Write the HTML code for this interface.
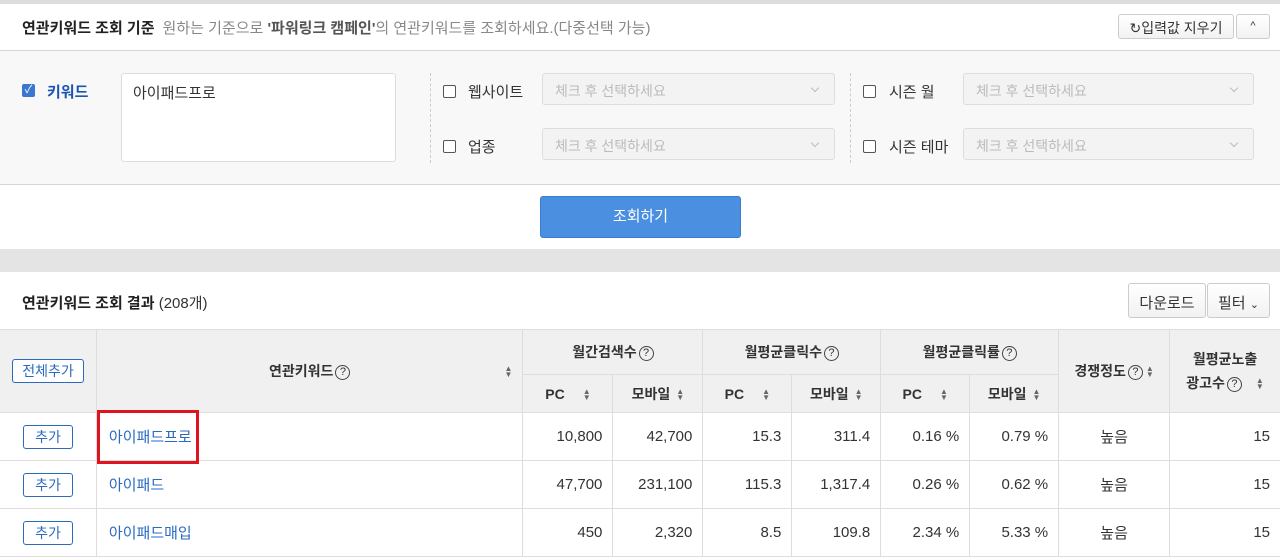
<!DOCTYPE html>
<html><head><meta charset="utf-8"><style>
*{box-sizing:border-box;margin:0;padding:0}
body{width:1280px;height:552px;overflow:hidden;background:#fff;font-family:"Liberation Sans","Noto Sans CJK KR",sans-serif;font-size:14px;color:#333;position:relative}
.a{position:absolute}
.cb{position:absolute;width:13px;height:13px;border:1px solid #555;border-radius:2px;background:#fff}
.sel{position:absolute;height:32px;border:1px solid #ddd;border-radius:3px;background:#f3f3f3;color:#bbb;padding:7px 12px;font-size:14px}
.sel:after{content:"";position:absolute;right:16px;top:11px;width:5px;height:5px;border-right:1px solid #bbb;border-bottom:1px solid #bbb;transform:rotate(45deg)}
.btn{position:absolute;border:1px solid #ccc;border-radius:3px;background:linear-gradient(#fff,#f2f2f2);text-align:center;color:#333}
.q{display:inline-block;width:15px;height:15px;border:1px solid #444;border-radius:50%;font-size:11px;line-height:13px;text-align:center;font-weight:normal;vertical-align:1px;margin-left:2px}
.s{display:inline-block;font-size:8px;color:#666;line-height:6px;vertical-align:middle;margin-left:6px}
table{position:absolute;left:-1px;top:329px;border-collapse:collapse;width:1282px}
td,th{border:1px solid #ddd;height:48px}
th{background:#f0f0f0;font-weight:bold;font-size:14px}
tr.h1 th{height:45px}
tr.h2 th{height:38px}
td{text-align:right;padding-right:10px;font-size:15px;color:#333}
td.c{text-align:center;padding:0}
td.k{text-align:left;padding-left:12px;color:#2a6bc0}
.add{display:inline-block;border:1px solid #2a6bc0;border-radius:3px;color:#2a6bc0;padding:1px 11px;font-size:14px;background:#fff}
</style></head><body>
<div class="a" style="left:0;top:0;width:1280px;height:4px;background:#ddd"></div>
<div class="a" style="left:22px;top:17px;font-size:15px"><b style="color:#222">연관키워드 조회 기준</b><span style="color:#888;margin-left:8px">원하는 기준으로 <b style="color:#555">'파워링크 캠페인'</b>의 연관키워드를 조회하세요.(다중선택 가능)</span></div>
<div class="btn" style="left:1118px;top:14px;width:116px;height:25px;padding-top:3px;font-size:14px">↻입력값 지우기</div>
<div class="btn" style="left:1236px;top:14px;width:34px;height:25px;font-size:11px;padding-top:5px">^</div>
<div class="a" style="left:0;top:50px;width:1280px;height:135px;background:#f8f8f8;border-top:1px solid #d5d5d5;border-bottom:1px solid #d5d5d5"></div>
<div class="a" style="left:22px;top:84px;width:13px;height:13px;background:#3a78d0;border-radius:2px;color:#fff;font-size:11px;line-height:13px;text-align:center">✓</div>
<div class="a" style="left:47px;top:81px;color:#1a56b0;font-weight:bold;font-size:15px">키워드</div>
<div class="a" style="left:121px;top:73px;width:275px;height:89px;background:#fff;border:1px solid #ddd;border-radius:3px;padding:8px 11px;font-size:15px">아이패드프로</div>
<div class="a" style="left:430px;top:73px;height:90px;border-left:1px dashed #ccc"></div>
<div class="a" style="left:850px;top:73px;height:90px;border-left:1px dashed #ccc"></div>
<div class="cb" style="left:443px;top:85px"></div><div class="a" style="left:468px;top:81px;font-size:15px">웹사이트</div>
<div class="cb" style="left:443px;top:140px"></div><div class="a" style="left:468px;top:136px;font-size:15px">업종</div>
<div class="cb" style="left:863px;top:85px"></div><div class="a" style="left:889px;top:81px;font-size:15px">시즌 월</div>
<div class="cb" style="left:863px;top:140px"></div><div class="a" style="left:889px;top:136px;font-size:15px">시즌 테마</div>
<div class="sel" style="left:542px;top:73px;width:293px">체크 후 선택하세요</div>
<div class="sel" style="left:542px;top:128px;width:293px">체크 후 선택하세요</div>
<div class="sel" style="left:963px;top:73px;width:291px">체크 후 선택하세요</div>
<div class="sel" style="left:963px;top:128px;width:291px">체크 후 선택하세요</div>
<div class="a" style="left:540px;top:196px;width:201px;height:42px;background:#4a8fe0;border:1px solid #3a7ccd;border-radius:3px;color:#fff;text-align:center;line-height:40px;font-size:15px">조회하기</div>
<div class="a" style="left:0;top:249px;width:1280px;height:23px;background:#e4e4e4"></div>
<div class="a" style="left:22px;top:292px;font-size:15px"><b style="color:#222">연관키워드 조회 결과</b> (208개)</div>
<div class="btn" style="left:1128px;top:283px;width:78px;height:35px;padding-top:8px;font-size:15px">다운로드</div>
<div class="btn" style="left:1207px;top:283px;width:63px;height:35px;padding-top:8px;font-size:15px">필터 <span style="font-size:11px">⌄</span></div>
<table>
<colgroup><col style="width:97px"><col style="width:427px"><col style="width:90px"><col style="width:90px"><col style="width:89px"><col style="width:89px"><col style="width:89px"><col style="width:89px"><col style="width:111px"><col style="width:111px"></colgroup>
<tr class="h1"><th rowspan="2"><span class="add" style="padding:1px 9px;font-weight:normal">전체추가</span></th><th rowspan="2" style="position:relative">연관키워드<span class="q">?</span><span class="s" style="position:absolute;right:10px;top:36px">▲<br>▼</span></th><th colspan="2">월간검색수<span class="q">?</span></th><th colspan="2">월평균클릭수<span class="q">?</span></th><th colspan="2">월평균클릭률<span class="q">?</span></th><th rowspan="2">경쟁정도<span class="q">?</span><span class="s" style="margin-left:3px">▲<br>▼</span></th><th rowspan="2" style="line-height:24px">월평균노출<br>광고수<span class="q">?</span><span class="s" style="margin-left:14px">▲<br>▼</span></th></tr>
<tr class="h2"><th>PC<span class="s" style="margin-left:18px">▲<br>▼</span></th><th>모바일<span class="s">▲<br>▼</span></th><th>PC<span class="s" style="margin-left:18px">▲<br>▼</span></th><th>모바일<span class="s">▲<br>▼</span></th><th>PC<span class="s" style="margin-left:18px">▲<br>▼</span></th><th>모바일<span class="s">▲<br>▼</span></th></tr>
<tr><td class="c"><span class="add">추가</span></td><td class="k">아이패드프로</td><td>10,800</td><td>42,700</td><td>15.3</td><td>311.4</td><td>0.16 %</td><td>0.79 %</td><td class="c">높음</td><td>15</td></tr>
<tr><td class="c"><span class="add">추가</span></td><td class="k">아이패드</td><td>47,700</td><td>231,100</td><td>115.3</td><td>1,317.4</td><td>0.26 %</td><td>0.62 %</td><td class="c">높음</td><td>15</td></tr>
<tr><td class="c"><span class="add">추가</span></td><td class="k">아이패드매입</td><td>450</td><td>2,320</td><td>8.5</td><td>109.8</td><td>2.34 %</td><td>5.33 %</td><td class="c">높음</td><td>15</td></tr>
</table>
<div class="a" style="left:97px;top:410px;width:102px;height:54px;border:3px solid #e0141e"></div>
</body></html>
